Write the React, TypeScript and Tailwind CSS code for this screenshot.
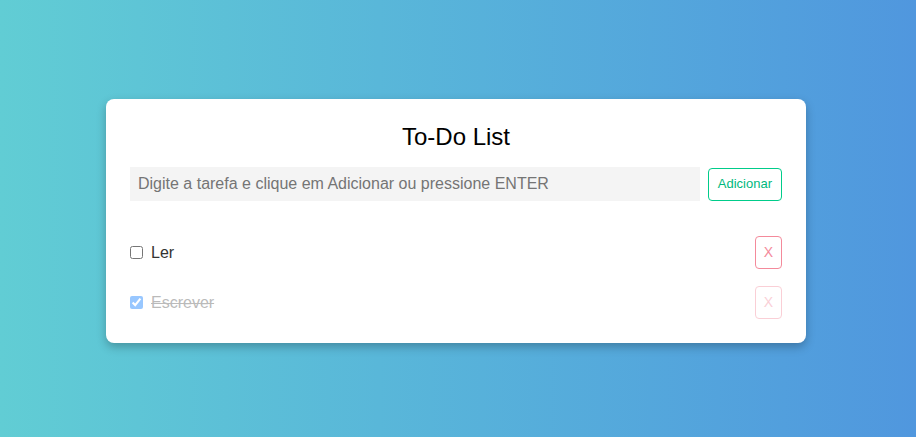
import { useState } from 'react';

interface Task {
  id: number;
  text: string;
  done: boolean;
}

const App = () => {
  const [tasks, setTasks] = useState<Task[]>([
    { id: 1, text: 'Ler', done: false },
    { id: 2, text: 'Escrever', done: true },
  ]);
  const [value, setValue] = useState('');

  const addTask = () => {
    if (!value.trim()) return;
    setTasks([...tasks, { id: Date.now(), text: value.trim(), done: false }]);
    setValue('');
  };

  return (
    <div
      className="min-h-screen flex items-center justify-center bg-gradient-to-r from-[#61cdd4] to-[#5097de]"
      style={{ fontFamily: '"Liberation Sans", Arial, sans-serif' }}
    >
      <div className="w-[700px] bg-white rounded-lg p-6 shadow-[0_4px_10px_rgba(0,0,0,0.25)] mt-[5px] mr-1">
        <h1 className="text-center text-[24px] leading-[28px] text-black mb-4">To-Do List</h1>

        {/* Input row */}
        <div className="flex items-center gap-2">
          <input
            value={value}
            onChange={e => setValue(e.target.value)}
            onKeyDown={e => e.key === 'Enter' && addTask()}
            placeholder="Digite a tarefa e clique em Adicionar ou pressione ENTER"
            className="flex-1 h-[34px] bg-[#f4f4f4] px-2 text-[16px] text-[#333] placeholder:text-[#757575] outline-none"
          />
          <button
            onClick={addTask}
            className="h-[33px] px-[9px] border border-[#00cc8a] rounded text-[13px] text-[#00b87d] bg-white"
          >
            Adicionar
          </button>
        </div>

        {/* Tasks */}
        <ul className="mt-[35px] flex flex-col gap-[17px]">
          {tasks.map(task => (
            <li
              key={task.id}
              className={`flex items-center justify-between ${task.done ? 'opacity-40' : ''}`}
            >
              <label className="flex items-center gap-2">
                <input
                  type="checkbox"
                  checked={task.done}
                  onChange={() =>
                    setTasks(tasks.map(t => (t.id === task.id ? { ...t, done: !t.done } : t)))
                  }
                  className="w-[13px] h-[13px] m-0"
                />
                <span className={`text-[16px] text-[#333] ${task.done ? 'line-through text-[#555]' : ''}`}>
                  {task.text}
                </span>
              </label>
              <button
                onClick={() => setTasks(tasks.filter(t => t.id !== task.id))}
                className="w-[27px] h-[33px] border border-[#f48a9b] rounded text-[14px] text-[#f48a9b] bg-white"
              >
                X
              </button>
            </li>
          ))}
        </ul>
      </div>
    </div>
  );
};

export default App;
